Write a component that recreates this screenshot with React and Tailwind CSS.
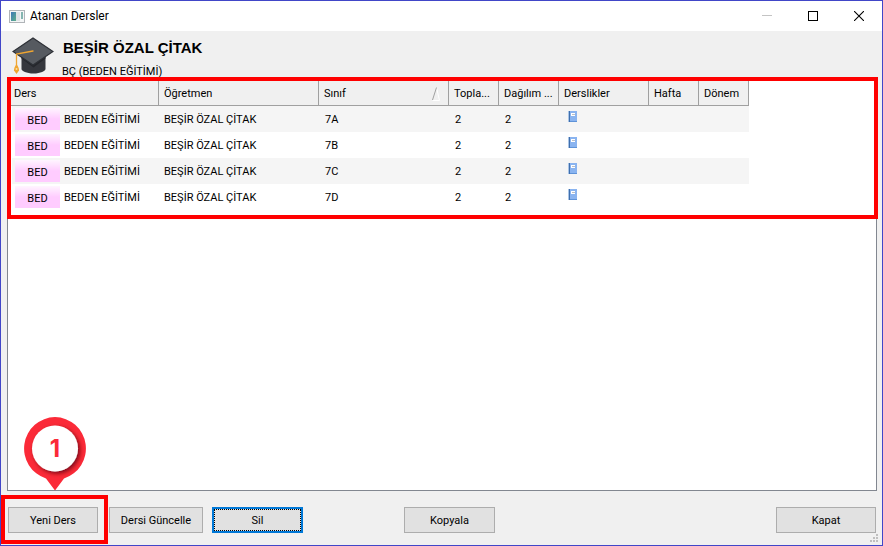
import React from 'react';

const columns = [
  { label: 'Ders', width: 'w-[151px]' },
  { label: 'Öğretmen', width: 'w-[160px]' },
  { label: 'Sınıf', width: 'w-[130px]', sorted: true },
  { label: 'Topla...', width: 'w-[50px]' },
  { label: 'Dağılım ...', width: 'w-[60px]' },
  { label: 'Derslikler', width: 'w-[90px]' },
  { label: 'Hafta', width: 'w-[50px]' },
  { label: 'Dönem', width: 'w-[50px]' },
];

const lessons = ['7A', '7B', '7C', '7D'].map((sinif) => ({
  code: 'BED',
  name: 'BEDEN EĞİTİMİ',
  teacher: 'BEŞİR ÖZAL ÇİTAK',
  sinif,
  total: 2,
  spread: 2,
}));

function AppIcon() {
  return (
    <svg width="16" height="13" viewBox="0 0 16 13">
      <defs>
        <linearGradient id="screen" x1="0" y1="0" x2="1" y2="1">
          <stop offset="0" stopColor="#3f78b8" />
          <stop offset="1" stopColor="#5fb08a" />
        </linearGradient>
      </defs>
      <rect x=".5" y=".5" width="15" height="12" fill="#f4f6f7" stroke="#b0b4b8" />
      <rect x="2" y="2" width="5" height="9" fill="url(#screen)" />
      <rect x="7" y="2" width="4" height="9" fill="#dfe3e6" />
      <rect x="12" y="2" width="2" height="7" fill="#84b5b0" />
    </svg>
  );
}

function GraduationCap() {
  return (
    <svg width="42" height="38" viewBox="0 0 42 38">
      <path d="M9.500 16v16c0 2 5 4.500 12 4.500s12-2.500 12-4.500V16z" fill="#35373d" />
      <path d="M9.500 18l12 9.500L33.500 18v3.500l-12 9-12-9z" fill="#25272c" />
      <path d="M21 1l20 13.500L21 28 1 14.500z" fill="#565a60" stroke="#2d3036" strokeWidth="1.200" />
      <path d="M21 14L4.500 17V28" fill="none" stroke="#f0a630" strokeWidth="1.300" strokeLinecap="round" />
      <path d="M4.500 27c-1.700 2-2.700 5-2.500 6.500L4.500 37 7 33.500c.2-1.500-.8-4.500-2.500-6.500z" fill="#f0a630" />
      <circle cx="4.500" cy="32" r="1" fill="#fbdfa3" />
    </svg>
  );
}

function BookIcon() {
  return (
    <svg width="10" height="11" viewBox="0 0 10 11" shapeRendering="crispEdges" aria-hidden="true">
      <rect x="0" y="0" width="9" height="11" fill="#8ab4f0" />
      <rect x="0" y="0" width="1" height="11" fill="#a9c4e6" />
      <rect x="1" y="0" width="1" height="11" fill="#3f6fae" />
      <rect x="2" y="10" width="7" height="1" fill="#5f93d8" />
      <rect x="3" y="2" width="4" height="3" fill="#ffffff" />
      <rect x="4" y="3" width="3" height="1" fill="#b9bec6" />
    </svg>
  );
}

function Pin() {
  return (
    <svg width="66" height="76" viewBox="0 0 66 76">
      <defs>
        <filter id="pinShadow" x="-20%" y="-20%" width="150%" height="150%">
          <feDropShadow dx="2" dy="2" stdDeviation="2" floodColor="#5e0510" floodOpacity="0.8" />
        </filter>
      </defs>
      <path d="M33 1a31.500 31.500 0 0 1 9 61.500L33 74.500l-9-12A31.500 31.500 0 0 1 33 1z" fill="#fb2a38" />
      <circle cx="33" cy="32.500" r="23" fill="#ffffff" filter="url(#pinShadow)" />
    </svg>
  );
}

function DialogButton({ className, children, focused }) {
  return (
    <button
      type="button"
      className={`h-[26px] shrink-0 bg-[#e1e1e1] text-center ${
        focused ? 'border-2 border-[#0078d7]' : 'border border-[#adadad] pt-0.5'
      } ${className}`}
    >
      {focused ? (
        <span className="flex h-full items-center justify-center border border-dotted border-black pt-0.5">
          {children}
        </span>
      ) : (
        children
      )}
    </button>
  );
}

export default function App() {
  return (
    <div className="flex min-h-screen flex-col border border-[#4146c8] bg-[#f0f0f0] font-[Roboto,sans-serif] text-[11px] leading-4 text-black">
      <header className="flex h-[30px] items-center bg-white pl-2">
        <AppIcon />
        <span className="ml-[5px] text-[12px]">Atanan Dersler</span>
        <div className="ml-auto flex h-full">
          <button type="button" aria-label="Simge durumuna küçült" className="flex w-[46px] items-center justify-center">
            <svg width="10" height="10" viewBox="0 0 10 10" shapeRendering="crispEdges">
              <path d="M0 4.500h10" stroke="#c4c4c4" />
            </svg>
          </button>
          <button type="button" aria-label="Ekranı kapla" className="flex w-[46px] items-center justify-center">
            <svg width="10" height="10" viewBox="0 0 10 10" shapeRendering="crispEdges">
              <path d="M.5.5h9v9h-9z" fill="none" stroke="#000" />
            </svg>
          </button>
          <button type="button" aria-label="Pencereyi kapat" className="flex w-[46px] items-center justify-center">
            <svg width="10" height="10" viewBox="0 0 10 10">
              <path d="M0 0l10 10M10 0L0 10" stroke="#000" strokeWidth="1.100" />
            </svg>
          </button>
        </div>
      </header>

      <section className="flex h-[49px] gap-2 pt-1.5 pl-[11px]">
        <GraduationCap />
        <div>
          <h1 className="pt-px pl-px font-['Liberation_Sans',sans-serif] text-[15px] leading-5 font-bold">BEŞİR ÖZAL ÇİTAK</h1>
          <p className="pt-1.5 leading-4">BÇ (BEDEN EĞİTİMİ)</p>
        </div>
      </section>

      <main className="relative mr-[5px] ml-1.5 flex-1 border border-[#828790] bg-white">
        <table className="table-fixed border-separate border-spacing-0 text-left">
          <thead>
            <tr>
              {columns.map((col) => (
                <th
                  key={col.label}
                  aria-sort={col.sorted ? 'ascending' : undefined}
                  className={`h-[25px] border-r border-b border-[#a0a0a0] bg-[#f0f0f0] p-0 pt-0.5 pl-[5px] font-normal whitespace-nowrap first:pl-1.5 ${col.width}`}
                >
                  <div className="flex items-center justify-between">
                    {col.label}
                    {col.sorted && (
                      <svg width="8" height="14" viewBox="0 0 8 14" className="mr-2">
                        <path d="M4.500.5L7.500 13.500H.5" fill="none" stroke="#fff" />
                        <path d="M.5 13L4.500.5" fill="none" stroke="#a0a0a0" />
                      </svg>
                    )}
                  </div>
                </th>
              ))}
            </tr>
          </thead>
          <tbody>
            {lessons.map((row) => (
              <tr key={row.sinif} className="h-[26px] odd:bg-[#f5f5f5]">
                <td className="border-l-4 border-white p-0">
                  <div className="flex items-center gap-1 pl-[3px]">
                    <span className="flex h-[22px] w-[45px] items-center justify-center bg-linear-to-b from-[#fff5ff] to-[#ffccff] to-50% pt-1">
                      {row.code}
                    </span>
                    <span className="pt-0.5">{row.name}</span>
                  </div>
                </td>
                <td className="p-0 pt-0.5 pl-[5px]">{row.teacher}</td>
                <td className="p-0 pt-0.5 pl-1.5">{row.sinif}</td>
                <td className="p-0 pt-0.5 pl-1.5">{row.total}</td>
                <td className="p-0 pt-0.5 pl-1.5">{row.spread}</td>
                <td className="p-0 pb-1.5 pl-[9px]">
                  <BookIcon />
                </td>
                <td className="p-0" />
                <td className="p-0" />
              </tr>
            ))}
          </tbody>
        </table>
        <div className="pointer-events-none absolute -top-1 -right-0.5 -left-px h-[142px] border-4 border-[#ff0000]" />
      </main>

      <footer className="relative flex h-[54px] items-start pt-4 pr-1.5 pl-[7px]">
        <DialogButton className="w-[90px]">Yeni Ders</DialogButton>
        <DialogButton className="ml-[11px] w-[94px]">Dersi Güncelle</DialogButton>
        <DialogButton className="ml-[9px] w-[91px]" focused>
          Sil
        </DialogButton>
        <DialogButton className="ml-[101px] w-[91px]">Kopyala</DialogButton>
        <DialogButton className="ml-auto w-[100px]">Kapat</DialogButton>

        <div className="pointer-events-none absolute top-1 left-0 h-[49px] w-[107px] border-4 border-[#ff0000]" />
        <div className="pointer-events-none absolute -top-[75px] left-[21px]">
          <Pin />
          <span className="absolute inset-x-0 top-[18px] text-center font-[Inter,sans-serif] text-[24px] leading-[30px] font-bold text-[#fb2a38]">
            1
          </span>
        </div>
        <svg width="8" height="8" viewBox="0 0 8 8" shapeRendering="crispEdges" className="absolute right-1 bottom-[3px]">
          <path d="M6 0h2v2H6zM3 3h2v2H3zM6 3h2v2H6zM0 6h2v2H0zM3 6h2v2H3zM6 6h2v2H6z" fill="#bfbfbf" />
        </svg>
      </footer>
    </div>
  );
}
